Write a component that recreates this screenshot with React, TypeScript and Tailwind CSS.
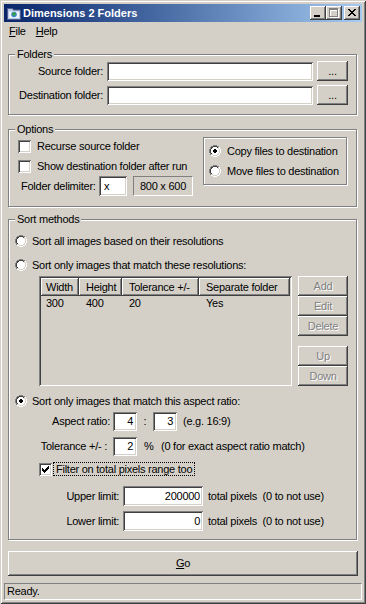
import React from "react"

const sunken =
  "shadow-[inset_1px_1px_0_#808080,inset_-1px_-1px_0_#ffffff,inset_2px_2px_0_#404040,inset_-2px_-2px_0_#d4d0c8]"
const raised =
  "shadow-[inset_-1px_-1px_0_#404040,inset_1px_1px_0_#ffffff,inset_-2px_-2px_0_#808080]"
const etched = "border border-[#808080] shadow-[inset_1px_1px_0_#ffffff,1px_1px_0_#ffffff]"

// turns a little pixel grid into one svg path
function pix(rows: string[], ch: string, ox = 0, oy = 0) {
  let d = ""
  rows.forEach((r, y) =>
    r.split("").forEach((c, x) => {
      if (c === ch) d += `M${ox + x} ${oy + y}h1v1h-1z`
    })
  )
  return d
}

const RADIO = [
  "....oooo....",
  "..ooiiiioo..",
  ".oiiwwwwiio.",
  ".oiwwwwwwio.",
  "oiwwwwwwwwio",
  "oiwwwwwwwwio",
  "oiwwwwwwwwio",
  "oiwwwwwwwwio",
  ".oiwwwwwwio.",
  ".oiiwwwwiio.",
  "..ooiiiioo..",
  "....oooo....",
]

function Radio({ checked = false }: { checked?: boolean }) {
  const paths: Record<string, string> = {}
  RADIO.forEach((row, y) =>
    row.split("").forEach((c, x) => {
      if (c === ".") return
      const tl = x + y < 11
      let col = "#ffffff"
      if (c === "o") col = tl ? "#808080" : "#ffffff"
      if (c === "i") col = tl ? "#404040" : "#d4d0c8"
      const dot =
        ((y === 4 || y === 7) && x >= 5 && x <= 6) || ((y === 5 || y === 6) && x >= 4 && x <= 7)
      if (checked && dot) col = "#000000"
      paths[col] = (paths[col] || "") + `M${x} ${y}h1v1h-1z`
    })
  )
  return (
    <svg width="12" height="12" shapeRendering="crispEdges" className="shrink-0">
      {Object.entries(paths).map(([c, d]) => (
        <path key={c} d={d} fill={c} />
      ))}
    </svg>
  )
}

const CHECK = ["......X", ".....XX", "X...XXX", "XX.XXX.", "XXXXX..", ".XXX...", "..X...."]

function Check({ checked = false }: { checked?: boolean }) {
  return (
    <span className={`relative w-[13px] h-[13px] bg-white shrink-0 ${sunken}`}>
      {checked && (
        <svg width="13" height="13" shapeRendering="crispEdges" className="absolute inset-0">
          <path d={pix(CHECK, "X", 3, 3)} fill="#000" />
        </svg>
      )}
    </span>
  )
}

function Group({
  label,
  className = "",
  children,
}: {
  label: string
  className?: string
  children?: React.ReactNode
}) {
  return (
    <div className={`relative ${etched} ${className}`}>
      <span className="absolute left-[6px] top-[-8px] px-[2px] bg-[#d4d0c8] leading-[14px]">{label}</span>
      {children}
    </div>
  )
}

function Edit({ className = "", children }: { className?: string; children?: React.ReactNode }) {
  return <div className={`bg-white flex items-center shrink-0 ${sunken} ${className}`}>{children}</div>
}

function Btn({
  className = "",
  disabled = false,
  children,
}: {
  className?: string
  disabled?: boolean
  children?: React.ReactNode
}) {
  return (
    <div
      className={`bg-[#d4d0c8] flex items-center justify-center shrink-0 ${raised} ${
        disabled ? "text-[#808080] [text-shadow:1px_1px_0_#ffffff]" : ""
      } ${className}`}
    >
      {children}
    </div>
  )
}

const CLOSE = ["XX....XX", ".XX..XX.", "..XXXX..", "...XX...", "..XXXX..", ".XX..XX.", "XX....XX"]
const MAX = [
  "XXXXXXXXX",
  "XXXXXXXXX",
  "X.......X",
  "X.......X",
  "X.......X",
  "X.......X",
  "X.......X",
  "X.......X",
  "XXXXXXXXX",
]

function TitleBtn({ kind, className = "" }: { kind: "min" | "max" | "close"; className?: string }) {
  return (
    <div className={`relative w-[16px] h-[14px] bg-[#d4d0c8] ${raised} ${className}`}>
      <svg width="16" height="14" shapeRendering="crispEdges" className="absolute inset-0">
        {kind === "min" && <rect x="4" y="9" width="6" height="2" fill="#000" />}
        {kind === "max" && (
          <>
            <path d={pix(MAX, "X", 4, 3)} fill="#ffffff" />
            <path d={pix(MAX, "X", 3, 2)} fill="#808080" />
          </>
        )}
        {kind === "close" && <path d={pix(CLOSE, "X", 4, 3)} fill="#000" />}
      </svg>
    </div>
  )
}

function AppIcon() {
  return (
    <svg width="16" height="16" viewBox="0 0 16 16" className="shrink-0">
      <path d="M1.5 3.5h5l1 1.5h7v9.5h-13z" fill="#b8c8e8" stroke="#4a5a8a" />
      <rect x="3" y="6.5" width="10" height="6.5" fill="#eef2fa" />
      <circle cx="8" cy="9.5" r="2.8" fill="#3a8ad0" />
      <path d="M6 8.5c1-1.6 3-1.6 4 0l-1 2.5c-.6-1-1.6-1-2.4 0z" fill="#3aa046" />
    </svg>
  )
}

function RadioRow({
  text,
  checked = false,
  className = "",
}: {
  text: string
  checked?: boolean
  className?: string
}) {
  return (
    <div className={`h-[20px] flex items-center pl-[6px] ${className}`}>
      <Radio checked={checked} />
      <span className="ml-[5px]">{text}</span>
    </div>
  )
}

const cols = [
  { name: "Width", w: "w-[38px] pl-[5px]", v: "300" },
  { name: "Height", w: "w-[43px] pl-[7px]", v: "400" },
  { name: "Tolerance +/-", w: "w-[77px] pl-[7px]", v: "20" },
  { name: "Separate folder", w: "w-[91px] pl-[7px]", v: "Yes" },
]

export default function App() {
  return (
    <div className="w-[366px] h-[604px] bg-[#d4d0c8] p-[4px] flex flex-col overflow-hidden whitespace-nowrap font-['Liberation_Sans',Arial,sans-serif] text-[11px] leading-[13px] tracking-[-0.25px] text-black shadow-[inset_1px_1px_0_#d4d0c8,inset_-1px_-1px_0_#404040,inset_2px_2px_0_#ffffff,inset_-2px_-2px_0_#808080]">
      <div className="h-[18px] flex items-center pl-[2px] pr-[2px] bg-linear-to-r from-[#0a246a] to-[#a6caf0]">
        <AppIcon />
        <span className="ml-[1px] text-white font-bold tracking-normal">Dimensions 2 Folders</span>
        <div className="ml-auto flex items-center">
          <TitleBtn kind="min" />
          <TitleBtn kind="max" />
          <TitleBtn kind="close" className="ml-[2px]" />
        </div>
      </div>

      <div className="h-[19px] flex items-center">
        <span className="px-[5px]">
          <u>F</u>ile
        </span>
        <span className="px-[5px]">
          <u>H</u>elp
        </span>
      </div>

      <div className="flex flex-col px-[4px]">
        <Group label="Folders" className="mt-[13px] h-[61px] w-[349px] pt-[6px]">
          <div className="h-[20px] flex items-center">
            <span className="w-[94px] text-right">Source folder:</span>
            <Edit className="ml-[4px] w-[206px] h-[19px]" />
            <Btn className="ml-[4px] w-[31px] h-[20px]">...</Btn>
          </div>
          <div className="h-[20px] flex items-center mt-[4px]">
            <span className="w-[94px] text-right">Destination folder:</span>
            <Edit className="ml-[4px] w-[206px] h-[19px]" />
            <Btn className="ml-[4px] w-[31px] h-[20px]">...</Btn>
          </div>
        </Group>

        <Group label="Options" className="mt-[14px] h-[78px] w-[349px] flex items-start">
          <div className="w-[194px] shrink-0 pl-[9px] pt-[6px] flex flex-col">
            <div className="h-[20px] flex items-center">
              <Check />
              <span className="ml-[6px]">Recurse source folder</span>
            </div>
            <div className="h-[20px] flex items-center">
              <Check />
              <span className="ml-[6px]">Show destination folder after run</span>
            </div>
            <div className="h-[20px] flex items-center">
              <span className="ml-[3px] w-[78px] shrink-0">Folder delimiter:</span>
              <Edit className="w-[28px] h-[20px] pl-[5px]">x</Edit>
              <div className="ml-[6px] w-[60px] h-[20px] shrink-0 flex items-center justify-center border border-t-[#808080] border-l-[#808080] border-b-white border-r-white">
                800 x 600
              </div>
            </div>
          </div>
          <div className={`mt-[7px] w-[144px] h-[48px] shrink-0 pt-[3px] pl-[5px] ${etched}`}>
            <div className="h-[20px] flex items-center">
              <Radio checked />
              <span className="ml-[6px]">Copy files to destination</span>
            </div>
            <div className="h-[20px] flex items-center">
              <Radio />
              <span className="ml-[6px]">Move files to destination</span>
            </div>
          </div>
        </Group>

        <Group label="Sort methods" className="mt-[12px] h-[321px] w-[349px] pt-[11px]">
          <RadioRow text="Sort all images based on their resolutions" />
          <RadioRow className="mt-[4px]" text="Sort only images that match these resolutions:" />
          <div className="mt-[1px] ml-[30px] flex">
            <div className={`w-[253px] h-[110px] p-[2px] bg-[#d4d0c8] ${sunken}`}>
              <div className="flex h-[18px]">
                {cols.map((c) => (
                  <div key={c.name} className={`h-[18px] flex items-center ${raised} ${c.w}`}>
                    {c.name}
                  </div>
                ))}
              </div>
              <div className="flex h-[14px] items-center">
                {cols.map((c) => (
                  <div key={c.name} className={c.w}>
                    {c.v}
                  </div>
                ))}
              </div>
            </div>
            <div className="ml-[6px] w-[50px] flex flex-col">
              <Btn disabled className="h-[20px] w-[50px]">
                Add
              </Btn>
              <Btn disabled className="h-[20px] w-[50px]">
                Edit
              </Btn>
              <Btn disabled className="h-[20px] w-[50px]">
                Delete
              </Btn>
              <Btn disabled className="h-[20px] w-[50px] mt-[10px]">
                Up
              </Btn>
              <Btn disabled className="h-[20px] w-[50px]">
                Down
              </Btn>
            </div>
          </div>
          <RadioRow checked className="mt-[5px]" text="Sort only images that match this aspect ratio:" />
          <div className="h-[20px] flex items-center">
            <span className="w-[101px] text-right">Aspect ratio:</span>
            <Edit className="ml-[3px] w-[24px] h-[19px] justify-end pr-[4px]">4</Edit>
            <span className="w-[16px] text-center">:</span>
            <Edit className="w-[24px] h-[19px] justify-end pr-[4px]">3</Edit>
            <span className="ml-[6px]">(e.g. 16:9)</span>
          </div>
          <div className="h-[20px] flex items-center mt-[5px]">
            <span className="w-[98px] text-right">Tolerance +/- :</span>
            <Edit className="ml-[6px] w-[24px] h-[19px] justify-end pr-[4px]">2</Edit>
            <span className="ml-[7px] w-[17px]">%</span>
            <span>(0 for exact aspect ratio match)</span>
          </div>
          <div className="h-[20px] flex items-center mt-[3px] pl-[30px]">
            <Check checked />
            <span className="ml-[1px] px-[2px] border border-dotted border-black leading-[12px]">
              Filter on total pixels range too
            </span>
          </div>
          <div className="h-[20px] flex items-center mt-[7px]">
            <span className="w-[110px] text-right">Upper limit:</span>
            <Edit className="ml-[4px] w-[80px] h-[20px] justify-end pr-[3px]">200000</Edit>
            <span className="ml-[5px] whitespace-pre">total pixels  (0 to not use)</span>
          </div>
          <div className="h-[20px] flex items-center mt-[5px]">
            <span className="w-[110px] text-right">Lower limit:</span>
            <Edit className="ml-[4px] w-[80px] h-[20px] justify-end pr-[3px]">0</Edit>
            <span className="ml-[5px] whitespace-pre">total pixels  (0 to not use)</span>
          </div>
        </Group>

        <Btn className="mt-[11px] w-[350px] h-[25px]">
          <span>
            <u>G</u>o
          </span>
        </Btn>
      </div>

      <div className="mt-[7px] h-[17px] flex items-center pl-[2px] border border-t-[#808080] border-l-[#808080] border-b-white border-r-white">
        Ready.
      </div>
    </div>
  )
}
